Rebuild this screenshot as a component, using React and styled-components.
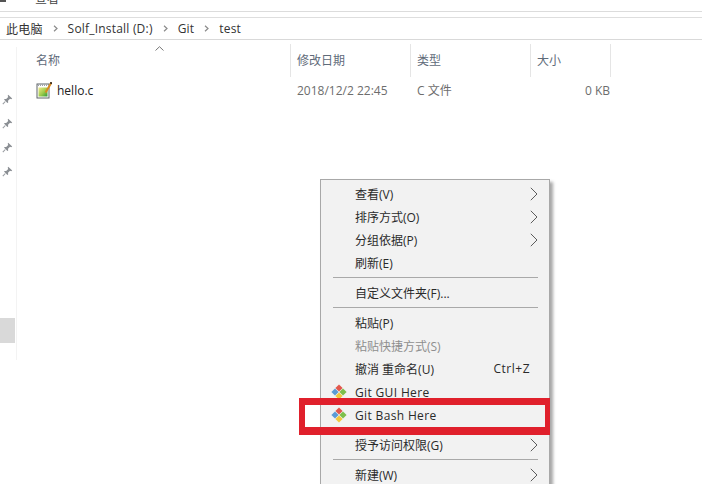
import React from 'react'
import styled, { createGlobalStyle } from 'styled-components'

const GlobalStyle = createGlobalStyle`
html, body {
  margin: 0;
  padding: 0;
  background: #fff;
}
body {
  font-family: "Open Sans", "Noto Sans CJK SC", sans-serif;
  font-size: 12px;
}
`

const columns = [
  { label: '名称', width: 271, pad: 16 },
  { label: '修改日期', width: 120, pad: 6 },
  { label: '类型', width: 120, pad: 6 },
  { label: '大小', width: 80, pad: 6 },
]

const menuGroups = [
  [
    { label: '查看(V)', arrow: true },
    { label: '排序方式(O)', arrow: true },
    { label: '分组依据(P)', arrow: true },
    { label: '刷新(E)' },
  ],
  [{ label: '自定义文件夹(F)...' }],
  [
    { label: '粘贴(P)' },
    { label: '粘贴快捷方式(S)', disabled: true },
    { label: '撤消 重命名(U)', shortcut: 'Ctrl+Z' },
    { label: 'Git GUI Here', git: true },
    { label: 'Git Bash Here', git: true },
  ],
  [
    { label: '授予访问权限(G)', arrow: true },
  ],
  [{ label: '新建(W)', arrow: true }],
]

function Crumb () {
  return (
    <svg width="5" height="7" viewBox="0 0 5 7">
      <path d="M1 .8 L4 3.5 L1 6.2" fill="none" stroke="#8a8a8a" strokeWidth="1.2" />
    </svg>
  )
}

function Caret () {
  return (
    <svg width="9" height="5" viewBox="0 0 9 5">
      <path d="M.5 4.5 L4.5 .7 L8.5 4.5" fill="none" stroke="#777" strokeWidth="1" />
    </svg>
  )
}

function PinIcon () {
  return (
    <svg width="11" height="11" viewBox="0 0 11 11">
      <path d="M6.2 .8 L10.2 4.6 L9.2 5.2 L8 4.8 L6 6.8 L6.2 8.4 L5.4 9 L2 5.6 L2.7 4.9 L4.2 5 L6.2 3 L5.7 1.7 Z" fill="#8b8f94" />
      <path d="M3.3 7.5 L.8 10.2" stroke="#9a9ea3" strokeWidth="1.1" />
    </svg>
  )
}

function FileIcon () {
  return (
    <svg width="16" height="17" viewBox="0 0 16 17">
      <defs>
        <linearGradient id="note" x1="0" y1="0" x2="1" y2="1">
          <stop offset="0" stopColor="#f1e98a" />
          <stop offset="0.55" stopColor="#9ccb4a" />
          <stop offset="1" stopColor="#2f9a3c" />
        </linearGradient>
      </defs>
      <rect x="1" y="2" width="12" height="14" fill="#fff" stroke="#5f6468" />
      <rect x="2.5" y="5.5" width="9" height="9" fill="url(#note)" />
      <path d="M2 3.2 H12" stroke="#9aa0a5" strokeDasharray="1 1" strokeWidth="1.4" />
      <path d="M15.4 .6 L9.6 10.5" stroke="#d98a1f" strokeWidth="2" />
      <path d="M15.6 .2 L14.6 1.8" stroke="#30261c" strokeWidth="2" />
    </svg>
  )
}

function GitIcon () {
  return (
    <svg width="16" height="16" viewBox="0 0 16 16">
      <path d="M8 .4 L11.6 4 L8 7.6 L4.4 4 Z" fill="#e2574c" />
      <path d="M4 4.4 L7.6 8 L4 11.6 L.4 8 Z" fill="#5b9bd5" />
      <path d="M12 4.4 L15.6 8 L12 11.6 L8.4 8 Z" fill="#7cbf4b" />
      <path d="M8 8.4 L11.6 12 L8 15.6 L4.4 12 Z" fill="#f2c83c" />
    </svg>
  )
}

function MenuArrow () {
  return (
    <svg width="8" height="14" viewBox="0 0 8 14">
      <path d="M.8 .8 L7 7 L.8 13.2" fill="none" stroke="#5c5c5c" strokeWidth="1" />
    </svg>
  )
}

function App () {
  return (
    <Page>
      <GlobalStyle />
      <Ribbon>
        <RibbonMark />
        <RibbonTab>查看</RibbonTab>
      </Ribbon>
      <Gap />
      <AddressBar>
        <CrumbText>此电脑</CrumbText>
        <Crumb />
        <CrumbText>Solf_Install (D:)</CrumbText>
        <Crumb />
        <CrumbText>Git</CrumbText>
        <Crumb />
        <CrumbText>test</CrumbText>
      </AddressBar>
      <Body>
        <Sidebar>
          <Pins>
            <PinIcon />
            <PinIcon />
            <PinIcon />
            <PinIcon />
          </Pins>
          <SelectedNav />
        </Sidebar>
        <FileList>
          <SortCaret><Caret /></SortCaret>
          <HeaderRow>
            {columns.map((col) => (
              <HeaderCell key={col.label} $width={col.width} $pad={col.pad}>{col.label}</HeaderCell>
            ))}
          </HeaderRow>
          <FileRow>
            <NameCell>
              <FileIcon />
              <FileName>hello.c</FileName>
            </NameCell>
            <DateCell>2018/12/2 22:45</DateCell>
            <TypeCell>C 文件</TypeCell>
            <SizeCell>0 KB</SizeCell>
          </FileRow>
        </FileList>
      </Body>
      <Menu>
        {menuGroups.map((group, i) => (
          <React.Fragment key={i}>
            {i > 0 && <Separator />}
            {group.map((item) => (
              <MenuItem key={item.label} $disabled={item.disabled}>
                <IconSlot>{item.git && <GitIcon />}</IconSlot>
                <MenuLabel $git={item.git}>{item.label}</MenuLabel>
                {item.shortcut && <Shortcut>{item.shortcut}</Shortcut>}
                {item.arrow && <ArrowSlot><MenuArrow /></ArrowSlot>}
              </MenuItem>
            ))}
          </React.Fragment>
        ))}
      </Menu>
      <Highlight />
    </Page>
  )
}

export default App

const Page = styled.div`
position: relative;
width: 702px;
height: 484px;
overflow: hidden;
background: #fff;
color: #333;
`
const Ribbon = styled.div`
display: flex;
align-items: flex-end;
height: 11px;
border-bottom: 1px solid #dcdcdc;
overflow: hidden;
`
const RibbonMark = styled.div`
flex: none;
width: 6px;
height: 2px;
margin-bottom: 9px;
background: #555;
`
const RibbonTab = styled.div`
margin-left: 29px;
margin-bottom: 5px;
font-size: 12px;
line-height: 14px;
color: #444;
`
const Gap = styled.div`
height: 5px;
`
const AddressBar = styled.div`
display: flex;
align-items: center;
gap: 10px;
height: 21px;
padding-left: 6px;
border-top: 1px solid #dedede;
border-bottom: 1px solid #d9d9d9;
`
const CrumbText = styled.span`
font-size: 12px;
letter-spacing: 0.2px;
color: #333;
white-space: nowrap;
`
const Body = styled.div`
display: flex;
`
const Sidebar = styled.div`
width: 16px;
height: 266px;
margin-top: 7px;
padding-top: 47px;
border-right: 1px solid #f3f3f3;
`
const Pins = styled.div`
display: flex;
flex-direction: column;
gap: 13px;
padding-left: 2px;
`
const SelectedNav = styled.div`
width: 15px;
height: 25px;
margin-top: 141px;
background: #d9d9d9;
`
const FileList = styled.div`
position: relative;
flex: 1;
padding-top: 4px;
`
const SortCaret = styled.div`
position: absolute;
left: 138px;
top: 6px;
line-height: 0;
`
const HeaderRow = styled.div`
display: flex;
height: 33px;
margin-left: 3px;
`
const HeaderCell = styled.div`
display: flex;
align-items: center;
box-sizing: border-box;
width: ${(p) => p.$width}px;
padding-left: ${(p) => p.$pad}px;
padding-bottom: 1px;
border-right: 1px solid #e5e5e5;
color: #5f6b7a;
font-size: 12px;
`
const FileRow = styled.div`
display: flex;
align-items: center;
height: 24px;
margin-top: 1px;
color: #6d6d6d;
font-size: 12px;
`
const NameCell = styled.div`
display: flex;
align-items: center;
gap: 5px;
width: 276px;
padding-left: 19px;
box-sizing: border-box;
`
const FileName = styled.span`
color: #222;
`
const DateCell = styled.div`
width: 120px;
padding-left: 4px;
box-sizing: border-box;
`
const TypeCell = styled.div`
width: 120px;
padding-left: 4px;
box-sizing: border-box;
`
const SizeCell = styled.div`
width: 77px;
text-align: right;
`
const Menu = styled.div`
position: absolute;
left: 320px;
top: 179px;
box-sizing: border-box;
width: 230px;
height: 320px;
padding: 2px 2px;
background: #f2f2f2;
border: 1px solid #a8a8a8;
box-shadow: 3px 3px 3px rgba(0, 0, 0, 0.35);
`
const MenuItem = styled.div`
display: flex;
align-items: center;
height: 23px;
color: ${(p) => (p.$disabled ? '#8e8e8e' : '#2a2a2a')};
font-size: 12px;
`
const IconSlot = styled.div`
display: flex;
justify-content: center;
width: 32px;
`
const MenuLabel = styled.span`
flex: 1;
white-space: nowrap;
padding-top: ${(p) => (p.$git ? '2px' : '0')};
letter-spacing: ${(p) => (p.$git ? '0.35px' : '0')};
`
const Shortcut = styled.span`
margin-right: 17px;
letter-spacing: 0.5px;
`
const ArrowSlot = styled.span`
display: flex;
margin-right: 9px;
`
const Separator = styled.div`
height: 1px;
margin: 3px 9px 3px 10px;
background: #a9a9a9;
`
const Highlight = styled.div`
position: absolute;
left: 299px;
top: 398px;
box-sizing: border-box;
width: 251px;
height: 37px;
border-style: solid;
border-color: #e0202c;
border-width: 7px 5px 8px 6px;
`
